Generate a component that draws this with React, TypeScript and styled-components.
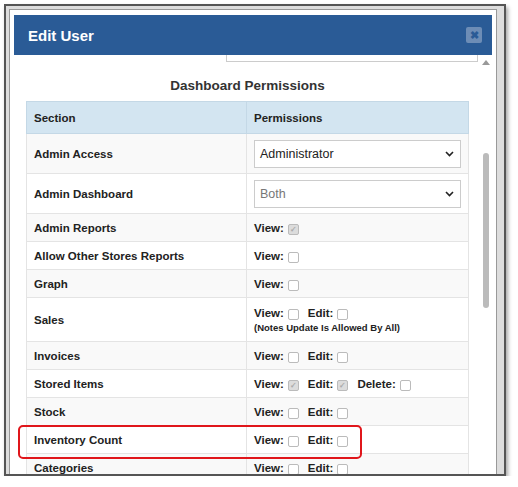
import React from 'react';
import styled, { createGlobalStyle } from 'styled-components';

const Global = createGlobalStyle`
  html, body { margin: 0; background: #fff; font-family: "Liberation Sans", Arial, sans-serif; }
`;

const Frame = styled.div`
  position: relative;
  width: 502px;
  height: 472px;
  margin: 4px 0 0 4px;
  border: 2px solid #555;
  box-shadow: 2px 3px 4px rgba(0,0,0,0.35);
  background: #ddd;
  overflow: hidden;
  box-sizing: border-box;
`;

const Modal = styled.div`
  margin: 3px 0 0 3px;
  width: 486px;
  height: 475px;
  background: #fff;
  border: 1px solid #999;
  display: flex;
  flex-direction: column;
`;

const Header = styled.div`
  height: 40px;
  margin: 5px 4px 0 4px;
  background: #2a5b96;
  display: flex;
  align-items: center;
  justify-content: space-between;
  padding: 0 10px 0 14px;
  color: #fff;
  font-weight: bold;
  font-size: 15px;
`;

const Close = styled.div`
  width: 16px;
  height: 16px;
  background: #6d8db6;
  border-radius: 2px;
  color: #2a5b96;
  font-size: 11px;
  display: flex;
  align-items: center;
  justify-content: center;
`;

const Body = styled.div`
  display: flex;
  flex: 1;
  position: relative;
`;

const Content = styled.div`
  flex: 1;
  padding: 0 0 0 16px;
`;

const TopInput = styled.div`
  margin-left: 200px;
  width: 250px;
  height: 6px;
  border: 1px solid #ccc;
  border-top: none;
`;

const Title = styled.div`
  text-align: center;
  font-weight: bold;
  font-size: 13.5px;
  color: #333;
  padding: 16px 0 8px;
  width: 443px;
`;

const Table = styled.table`
  border-collapse: collapse;
  width: 443px;
  font-size: 11.5px;
  color: #222;
  td, th { border: 1px solid #e4e4e4; padding: 0 7px; text-align: left; font-weight: bold; }
`;

const HeadRow = styled.tr`
  height: 32px;
  background: #d3e5f1;
  th { border-color: #c4d8e6; }
`;

const Row = styled.tr<{ $h: number; $odd: boolean }>`
  height: ${p => p.$h}px;
  background: ${p => (p.$odd ? '#f9f9f9' : '#fff')};
`;

const Select = styled.div<{ $muted?: boolean }>`
  height: 26px;
  border: 1px solid #ccc;
  display: flex;
  align-items: center;
  justify-content: space-between;
  padding: 0 6px 0 5px;
  font-weight: normal;
  font-size: 12.5px;
  color: ${p => (p.$muted ? '#777' : '#222')};
  background: #fff;
`;

const Perm = styled.span`
  margin-right: 9px;
  display: inline-flex;
  align-items: center;
`;

const Box = styled.span<{ $on?: boolean }>`
  display: inline-flex;
  align-items: center;
  justify-content: center;
  width: 9px;
  height: 9px;
  margin-left: 4px;
  border: 1px solid #bbb;
  border-radius: 2px;
  background: ${p => (p.$on ? '#dcdcdc' : '#fff')};
  color: #aaa;
  font-size: 8px;
  margin-top: 3px;
`;

const Note = styled.div`
  font-size: 9.5px;
  margin-top: 2px;
`;

const Scroll = styled.div`
  width: 12px;
  display: flex;
  flex-direction: column;
  align-items: center;
  padding-top: 5px;
  margin-right: 4px;
`;

const Thumb = styled.div`
  width: 6px;
  height: 155px;
  background: #bbb;
  border-radius: 3px;
  margin-top: 88px;
`;

const Highlight = styled.div`
  position: absolute;
  left: 8px;
  top: 370px;
  width: 340px;
  height: 30px;
  border: 2px solid #e0161b;
  border-radius: 5px;
`;

const Chevron = () => (
  <svg width="9" height="6" viewBox="0 0 9 6"><path d="M1 1l3.5 3.5L8 1" stroke="#222" strokeWidth="1.6" fill="none" /></svg>
);

const P = ({ label, on }: { label: string; on?: boolean }) => (
  <Perm>{label}:<Box $on={on}>{on ? '✓' : ''}</Box></Perm>
);

type R = { name: string; h: number; perms: React.ReactNode };

const rows: R[] = [
  { name: 'Admin Access', h: 40, perms: <Select>Administrator<Chevron /></Select> },
  { name: 'Admin Dashboard', h: 40, perms: <Select $muted>Both<Chevron /></Select> },
  { name: 'Admin Reports', h: 28, perms: <P label="View" on /> },
  { name: 'Allow Other Stores Reports', h: 28, perms: <P label="View" /> },
  { name: 'Graph', h: 28, perms: <P label="View" /> },
  { name: 'Sales', h: 44, perms: <><P label="View" /><P label="Edit" /><Note>(Notes Update Is Allowed By All)</Note></> },
  { name: 'Invoices', h: 28, perms: <><P label="View" /><P label="Edit" /></> },
  { name: 'Stored Items', h: 28, perms: <><P label="View" on /><P label="Edit" on /><P label="Delete" /></> },
  { name: 'Stock', h: 28, perms: <><P label="View" /><P label="Edit" /></> },
  { name: 'Inventory Count', h: 28, perms: <><P label="View" /><P label="Edit" /></> },
  { name: 'Categories', h: 28, perms: <><P label="View" /><P label="Edit" /></> },
];

export default function App() {
  return (
    <>
      <Global />
      <Frame>
        <Modal>
          <Header>Edit User<Close>✖</Close></Header>
          <Body>
            <Content>
              <TopInput />
              <Title>Dashboard Permissions</Title>
              <Table>
                <thead>
                  <HeadRow><th style={{ width: 205 }}>Section</th><th>Permissions</th></HeadRow>
                </thead>
                <tbody>
                  {rows.map((r, i) => (
                    <Row key={r.name} $h={r.h} $odd={i % 2 === 0}>
                      <td>{r.name}</td>
                      <td>{r.perms}</td>
                    </Row>
                  ))}
                </tbody>
              </Table>
            </Content>
            <Scroll>
              <svg width="8" height="5" viewBox="0 0 8 5"><path d="M0 5L4 0L8 5Z" fill="#999" /></svg>
              <Thumb />
            </Scroll>
            <Highlight />
          </Body>
        </Modal>
      </Frame>
    </>
  );
}
